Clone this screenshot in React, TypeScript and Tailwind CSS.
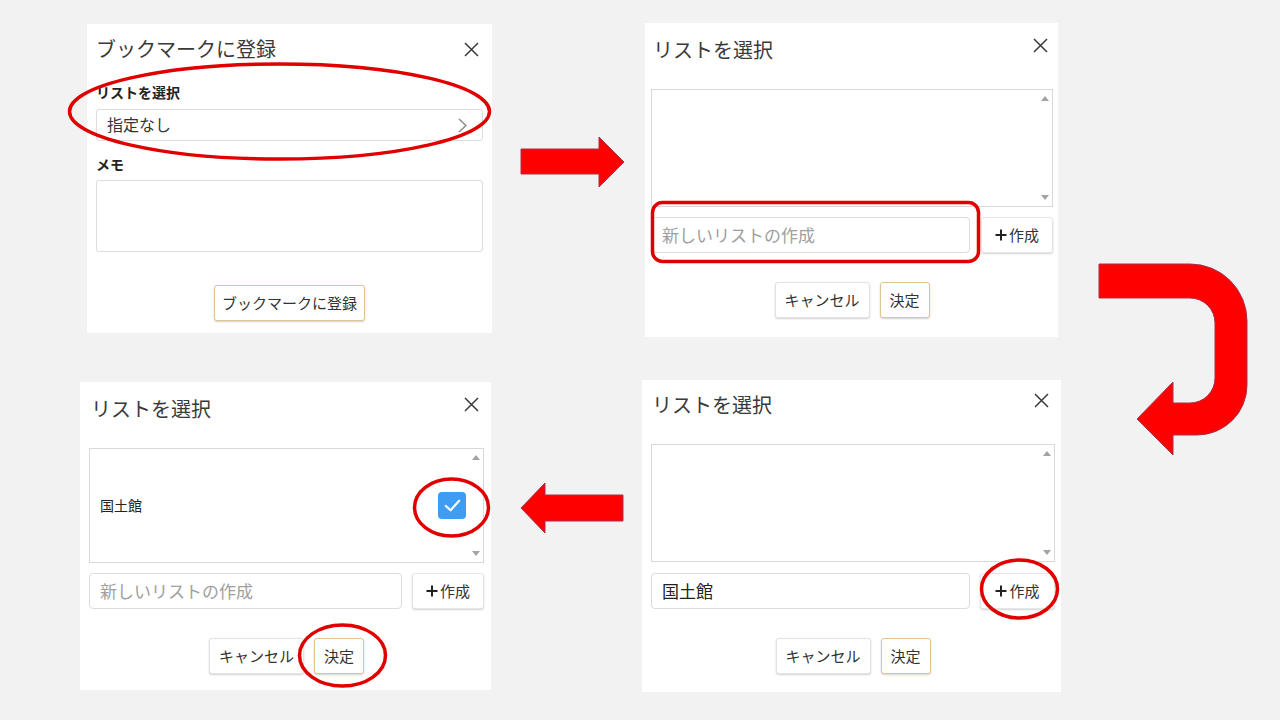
import React from 'react';

const CloseIcon = ({ className = '' }: { className?: string }) => (
  <svg viewBox="0 0 15 15" className={`w-[15px] h-[15px] shrink-0 ${className}`}>
    <path d="M1 1 L14 14 M14 1 L1 14" stroke="#3a3a3a" strokeWidth="1.5" fill="none" />
  </svg>
);

const ScrollTrack = () => (
  <div className="w-[14px] flex flex-col justify-between items-center py-[6px]">
    <svg viewBox="0 0 8 5" className="w-[8px] h-[5px]">
      <path d="M0 5 L4 0 L8 5 Z" fill="#a3a3a3" />
    </svg>
    <svg viewBox="0 0 8 5" className="w-[8px] h-[5px]">
      <path d="M0 0 L8 0 L4 5 Z" fill="#a3a3a3" />
    </svg>
  </div>
);

const Button = ({ children, primary, className = '' }: { children: React.ReactNode, primary?: boolean, className?: string }) => (
  <div
    className={`h-[36px] flex items-center justify-center bg-white rounded-[3px] border text-[15px] text-[#333] shadow-[0_1px_2px_rgba(0,0,0,0.18)] ${primary ? 'border-[#e3c391]' : 'border-[#e2e2e2]'} ${className}`}
  >
    {children}
  </div>
);

type DialogProps = {
  box: string;
  head: string;
  closeCls: string;
  list: string;
  row: string;
  createW: string;
  listContent?: React.ReactNode;
  value?: string;
};

// リスト選択ダイアログ（3枚共通）
const ListDialog = ({ box, head, closeCls, list, row, createW, listContent, value }: DialogProps) => (
  <div className={`bg-white flex flex-col ${box}`}>
    <div className={`flex justify-between items-start ${head}`}>
      <span className="text-[20px] leading-[28px] text-[#3a3a3a]">リストを選択</span>
      <CloseIcon className={closeCls} />
    </div>
    <div className={`flex border border-[#d9d9d9] ${list}`}>
      <div className="flex-1 flex items-center">{listContent}</div>
      <ScrollTrack />
    </div>
    <div className={`flex ${row}`}>
      <div className="flex-1 h-[36px] flex items-center border border-[#dcdcdc] rounded-[4px] pl-[10px] text-[17px]">
        {value ? <span className="text-[#222]">{value}</span> : <span className="text-[#a0a0a0]">新しいリストの作成</span>}
      </div>
      <Button className={`${createW} text-[13px] border-[#e6e6e6] gap-[2px]`}>
        <svg viewBox="0 0 12 12" className="w-[12px] h-[12px]">
          <path d="M6 0.5 V11.5 M0.5 6 H11.5" stroke="#222" strokeWidth="2" fill="none" />
        </svg>
        <span>作成</span>
      </Button>
    </div>
    <div className="flex justify-center gap-[10px] mt-[29px]">
      <Button className="w-[95px]">キャンセル</Button>
      <Button primary className="w-[50px]">決定</Button>
    </div>
  </div>
);

export default function App() {
  return (
    <div className="relative w-[1280px] h-[720px] bg-[#f2f2f2] overflow-hidden font-['Noto_Sans_CJK_JP',sans-serif]">
      {/* 上段 */}
      <div className="flex items-start">
        {/* ブックマークに登録 */}
        <div className="ml-[87px] mt-[24px] w-[405px] h-[309px] bg-white flex flex-col px-[9px] pt-[11px]">
          <div className="flex justify-between items-start">
            <span className="text-[20px] leading-[28px] text-[#3a3a3a]">ブックマークに登録</span>
            <CloseIcon className="mt-[7px] mr-[4px]" />
          </div>
          <div className="mt-[19px] text-[14px] leading-[20px] font-bold text-[#222]">リストを選択</div>
          <div className="mt-[7px] h-[32px] flex items-center justify-between border border-[#dcdcdc] rounded-[3px] pl-[10px] pr-[15px] text-[16px] text-[#333]">
            <span className="-mt-[2px]">指定なし</span>
            <svg viewBox="0 0 9 15" className="w-[9px] h-[15px]">
              <path d="M1 1 L8 7.5 L1 14" stroke="#8a8a8a" strokeWidth="1.5" fill="none" />
            </svg>
          </div>
          <div className="mt-[13px] text-[14px] leading-[20px] font-bold text-[#222]">メモ</div>
          <div className="mt-[6px] h-[72px] border border-[#dcdcdc] rounded-[3px]" />
          <div className="flex justify-center mt-[33px]">
            <Button primary className="w-[151px] text-[14.5px]">ブックマークに登録</Button>
          </div>
        </div>

        <ListDialog
          box="ml-[153px] mt-[23px] w-[413px] h-[314px] pl-[6px] pr-[5px] pt-[13px]"
          head="pl-[2px]"
          closeCls="mt-[2px] mr-[5px]"
          list="mt-[25px] h-[118px]"
          row="mt-[10px] gap-[11px]"
          createW="w-[72px]"
        />
      </div>

      {/* 下段 */}
      <div className="flex items-start">
        <ListDialog
          box="ml-[80px] mt-[45px] w-[411px] h-[308px] pl-[9px] pr-[7px] pt-[13px]"
          head="pl-[2px]"
          closeCls="mt-[2px] mr-[5px]"
          list="mt-[25px] h-[115px]"
          row="mt-[10px] gap-[10px]"
          createW="w-[72px]"
          listContent={
            <div className="flex-1 flex items-center justify-between pl-[10px] pr-[3px]">
              <span className="text-[14px] text-[#222]">国土館</span>
              <div className="w-[28px] h-[27px] rounded-[4px] bg-[#3f9cf3] flex items-center justify-center">
                <svg viewBox="0 0 20 20" className="w-[19px] h-[19px]">
                  <path d="M3 10.5 L8 15 L17 5" stroke="white" strokeWidth="2.3" fill="none" strokeLinecap="round" strokeLinejoin="round" />
                </svg>
              </div>
            </div>
          }
        />
        <ListDialog
          box="ml-[151px] mt-[43px] w-[419px] h-[312px] pl-[9px] pr-[6px] pt-[11px]"
          head="pl-[1px]"
          closeCls="mt-[2px] mr-[6px]"
          list="mt-[25px] h-[118px]"
          row="mt-[11px] gap-[10px]"
          createW="w-[75px]"
          value="国土館"
        />
      </div>

      {/* 注釈（矢印・赤丸） */}
      <svg className="absolute inset-0 w-[1280px] h-[720px] pointer-events-none" viewBox="0 0 1280 720">
        <g fill="#ff0000" stroke="#a8304e" strokeWidth="1">
          <path d="M521 149 L599 149 L599 137 L624 162 L599 187 L599 174 L521 174 Z" />
          <path d="M623 495 L545 495 L545 483 L521 508 L545 533 L545 521 L623 521 Z" />
          <path d="M1099 264 L1190 264 A57 57 0 0 1 1247 321 L1247 385 A50 50 0 0 1 1197 435 L1173 435 L1173 455 L1137 419 L1173 382 L1173 403 L1190 403 A25 25 0 0 0 1215 378 L1215 323 A25 25 0 0 0 1190 298 L1099 298 Z" />
        </g>
        <g fill="none" stroke="#e00000" strokeWidth="3.5">
          <ellipse cx="279.5" cy="111.5" rx="210" ry="47.5" />
          <rect x="652.5" y="202.5" width="326" height="59" rx="10" />
          <ellipse cx="451.5" cy="507.5" rx="37" ry="28.5" />
          <ellipse cx="342.5" cy="655.5" rx="43" ry="30.5" />
          <ellipse cx="1019.5" cy="589" rx="38" ry="29" />
        </g>
      </svg>
    </div>
  );
}
